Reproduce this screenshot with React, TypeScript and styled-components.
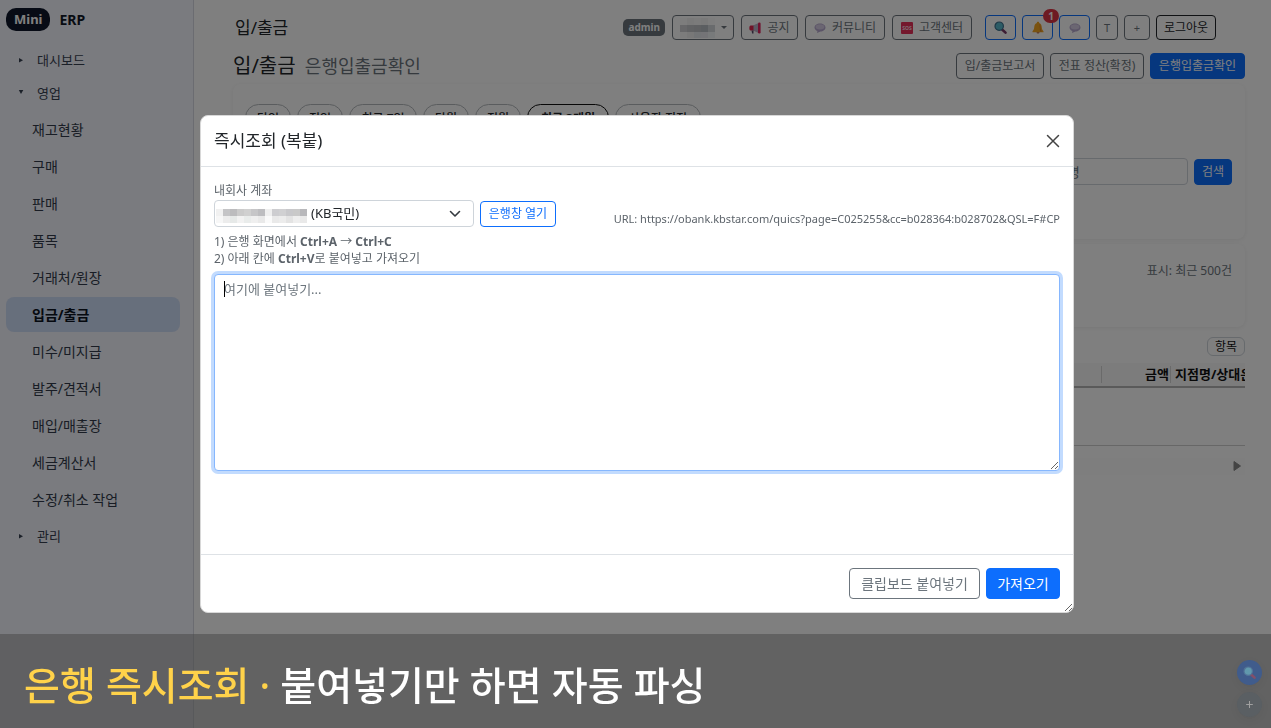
import React from 'react';
import styled, { createGlobalStyle, css } from 'styled-components';

const GlobalStyle = createGlobalStyle`
  *, *::before, *::after { box-sizing: border-box; }
  body {
    margin: 0;
    background: #fff;
    color: #212529;
    font: 13px/1.5 "Noto Sans", "Noto Sans CJK KR", sans-serif;
  }
  button, input, select, textarea { font-family: inherit; }
  h1, h2, p { margin: 0; font-weight: 400; }
`;

const Shell = styled.div`
  display: flex;
  min-height: 100vh;
`;

/* ---------- sidebar ---------- */
const Sidebar = styled.aside`
  flex: 0 0 194px;
  padding: 8px 13px 8px 6px;
  background: #f4f6ff;
  border-right: 1px solid #d6d9e2;
`;
const Brand = styled.div`
  display: flex;
  align-items: center;
  gap: 9px;
  height: 23px;
  margin-bottom: 12px;
  color: #111827;
  font-size: 14px;
  font-weight: 700;
`;
const BrandPill = styled.span`
  padding: 0 8px;
  border-radius: 10px;
  background: #0f172a;
  color: #fff;
  font-size: 13px;
  line-height: 23px;
`;
const Group = styled.button`
  display: flex;
  align-items: center;
  width: 100%;
  height: 33px;
  padding: 0 0 0 11px;
  border: 0;
  background: none;
  color: #374151;
  font-size: 13px;
`;
const Marker = styled.svg`
  width: 8px;
  height: 8px;
  margin-right: 12px;
  fill: #374151;
`;
const Menu = styled.nav`
  display: flex;
  flex-direction: column;
  gap: 2px;
  padding: 3px 0 2px;
`;
const MenuLink = styled.a<{ $active?: boolean }>`
  height: 35px;
  padding-left: 26px;
  border-radius: 8px;
  color: ${p => (p.$active ? '#0b1220' : '#333b4a')};
  background: ${p => (p.$active ? '#cfdef8' : 'transparent')};
  font-size: 14px;
  font-weight: ${p => (p.$active ? 700 : 400)};
  line-height: 35px;
  text-decoration: none;
`;

/* ---------- main ---------- */
const Main = styled.main`
  flex: 1;
  min-width: 0;
  padding: 15px 26px 0 39px;
`;
const TopBar = styled.header`
  display: flex;
  align-items: center;
  justify-content: space-between;
  height: 25px;
  margin-bottom: 13px;
  padding: 0 29px 0 2px;
`;
const TopTitle = styled.h2`
  font-size: 17px;
  line-height: 25px;
`;
const Tools = styled.div`
  display: flex;
  align-items: center;
  gap: 6px;
`;
const ToolGroup = styled(Tools)`
  gap: 7px;
  margin-right: 7px;
`;
const RoleBadge = styled.span`
  padding: 0 5px;
  border-radius: 5px;
  background: #6c757d;
  color: #fff;
  font-size: 10px;
  font-weight: 700;
  line-height: 17px;
`;
const tones = {
  secondary: css`color: #6c757d; border-color: #6c757d; background: transparent;`,
  primary: css`color: #0d6efd; border-color: #0d6efd; background: transparent;`,
  dark: css`color: #212529; border-color: #212529; background: transparent;`,
  solid: css`color: #fff; border-color: #0d6efd; background: #0d6efd;`,
};
const Button = styled.button<{ $tone?: keyof typeof tones; $h?: number; $w?: number; $size?: number }>`
  position: relative;
  display: inline-flex;
  align-items: center;
  justify-content: center;
  gap: 6px;
  flex: none;
  height: ${p => p.$h ?? 26}px;
  min-width: ${p => p.$w ?? 0}px;
  padding: 0 6px;
  border: 1px solid;
  border-radius: 4px;
  font-size: ${p => p.$size ?? 12}px;
  line-height: 18px;
  white-space: nowrap;
  ${p => tones[p.$tone ?? 'secondary']}
`;
const AlertCount = styled.span`
  position: absolute;
  top: -7px;
  right: -7px;
  width: 16px;
  border-radius: 8px;
  background: #dc3545;
  color: #fff;
  font-size: 10px;
  font-weight: 700;
  line-height: 14px;
`;
const Caret = styled.span`
  border: 3px solid transparent;
  border-top-color: #6c757d;
  border-bottom: 0;
`;
const PageHead = styled.div`
  display: flex;
  align-items: center;
  justify-content: space-between;
  height: 26px;
  margin-bottom: 5px;
`;
const PageTitle = styled.h1`
  font-size: 20px;
  line-height: 26px;
`;
const PageSub = styled.span`
  margin-left: 4px;
  color: #6c757d;
  font-size: 18px;
`;
const Card = styled.section`
  padding: 20px 13px 0 12px;
  border-radius: 8px;
  box-shadow: 0 1px 5px rgba(0, 0, 0, 0.07);
`;
const FilterCard = styled(Card)`
  height: 155px;
  margin-bottom: 5px;
`;
const SummaryCard = styled(Card)`
  height: 83px;
  margin-bottom: 10px;
  padding-top: 18px;
  color: #6c757d;
  font-size: 12px;
  text-align: right;
`;
const Pills = styled.div`
  display: flex;
  gap: 6px;
  margin-bottom: 27px;
`;
const Pill = styled.button<{ $active?: boolean; $w: number }>`
  height: 27px;
  min-width: ${p => p.$w}px;
  padding: 0;
  border: 1px solid ${p => (p.$active ? '#111' : '#b5b9bd')};
  border-radius: 14px;
  background: transparent;
  color: #212529;
  font-size: 12px;
  font-weight: ${p => (p.$active ? 700 : 500)};
`;
const SearchRow = styled.form`
  display: flex;
  align-items: center;
  justify-content: flex-end;
  gap: 6px;
`;
const SearchInput = styled.input`
  width: 194px;
  height: 27px;
  padding: 0 8px;
  border: 1px solid #ced4da;
  border-radius: 4px;
  background: transparent;
  font-size: 13px;
  &::placeholder { color: #6c757d; }
`;
const TableTools = styled.div`
  display: flex;
  justify-content: flex-end;
  margin-bottom: 7px;
`;
const ColumnsButton = styled.button`
  height: 19px;
  padding: 0 7px;
  border: 1px solid #ced4da;
  border-radius: 6px;
  background: transparent;
  color: #111;
  font-size: 12px;
  line-height: 16px;
`;
const TableWrap = styled.div`
  overflow: hidden;
`;
const Table = styled.table`
  width: 1180px;
  table-layout: fixed;
  border-collapse: collapse;
  font-size: 13px;
`;
const Th = styled.th<{ $w?: number; $right?: boolean }>`
  width: ${p => (p.$w ? `${p.$w}px` : 'auto')};
  height: 24px;
  padding: 0 2px 2px 4px;
  border-bottom: 2px solid #b4b4b4;
  background: #f8f8f8 linear-gradient(#d5d5d5, #d5d5d5) no-repeat right 3px / 1px 17px;
  color: #111;
  line-height: 18px;
  text-align: ${p => (p.$right ? 'right' : 'left')};
`;
const Td = styled.td`
  height: 58px;
  border-bottom: 1px solid #cfcfcf;
`;
const ScrollTrack = styled.div`
  display: flex;
  align-items: center;
  justify-content: flex-end;
  height: 17px;
  margin-top: 12px;
  padding-right: 4px;
  background: #fcfcfc;
`;

/* ---------- dialog ---------- */
const Backdrop = styled.div`
  position: fixed;
  inset: 0;
  display: flex;
  align-items: center;
  justify-content: center;
  padding-left: 3px;
  background: rgba(0, 0, 0, 0.5);
`;
const Dialog = styled.div`
  display: flex;
  flex-direction: column;
  width: min(874px, 94%);
  overflow: hidden;
  resize: both;
  border: 1px solid #d8d8d8;
  border-radius: 8px;
  background: #fff;
`;
const DialogHead = styled.div`
  display: flex;
  align-items: center;
  justify-content: space-between;
  height: 51px;
  padding: 0 13px;
  border-bottom: 1px solid #dee2e6;
`;
const DialogTitle = styled.h2`
  font-size: 17px;
  line-height: 24px;
`;
const CloseButton = styled.button`
  display: flex;
  padding: 0;
  border: 0;
  background: none;
`;
const DialogBody = styled.div`
  display: flex;
  flex-direction: column;
  min-height: 387px;
  padding: 15px 13px;
  color: #5c636a;
  font-size: 12px;
  line-height: 18px;
`;
const AccountRow = styled.div`
  display: flex;
  align-items: center;
  gap: 6px;
  margin-bottom: 6px;
`;
const SelectBox = styled.div`
  position: relative;
  width: 260px;
`;
const Select = styled.select`
  display: block;
  width: 100%;
  height: 27px;
  padding: 0 30px 1px 96px;
  border: 1px solid #ced4da;
  border-radius: 4px;
  appearance: none;
  background: #fff;
  color: #212529;
  font-size: 13px;
`;
const Chevron = styled.svg`
  position: absolute;
  top: 8px;
  right: 13px;
  pointer-events: none;
`;
const HiddenNumber = styled.svg`
  position: absolute;
  top: 9px;
  left: 2px;
  pointer-events: none;
`;
const BankUrl = styled.span`
  align-self: flex-end;
  margin-left: auto;
  font-size: 11px;
  line-height: 16px;
`;
const Help = styled.p`
  line-height: 17px;
`;
const PasteBox = styled.div`
  position: relative;
  margin-top: 7px;
`;
const PasteArea = styled.textarea`
  display: block;
  width: 100%;
  height: 197px;
  padding: 4px 9px;
  outline: 0;
  border: 1px solid #86b7fe;
  border-radius: 4px;
  box-shadow: 0 0 0 3px #c2dbfe;
  caret-color: transparent;
  font-size: 13px;
  line-height: 20px;
  &::placeholder { color: #6c757d; }
`;
const TextCursor = styled.span`
  position: absolute;
  top: 7px;
  left: 10px;
  width: 1px;
  height: 16px;
  background: #000;
`;
const DialogFoot = styled.div`
  display: flex;
  align-items: center;
  justify-content: flex-end;
  gap: 6px;
  height: 58px;
  padding: 0 13px;
  border-top: 1px solid #dee2e6;
`;

/* ---------- caption and floating buttons ---------- */
const Caption = styled.div`
  position: fixed;
  right: 0;
  bottom: 0;
  left: 0;
  display: flex;
  align-items: center;
  height: 94px;
  padding: 0 24px;
  background: rgba(70, 70, 70, 0.5);
`;
const CaptionText = styled.p`
  flex: 1;
  padding-top: 8px;
  color: #fff;
  font-size: 39px;
  font-weight: 500;
  line-height: 56px;
`;
const Accent = styled.span`
  color: #ffd24a;
`;
const Fabs = styled.div`
  position: absolute;
  right: 9px;
  bottom: 11px;
  display: flex;
  flex-direction: column;
  gap: 7px;
`;
const Fab = styled.button<{ $primary?: boolean }>`
  display: flex;
  align-items: center;
  justify-content: center;
  width: 25px;
  height: 25px;
  padding: 0;
  border: 0;
  border-radius: 50%;
  background: ${p => (p.$primary ? '#405c8c' : '#5a5f63')};
  box-shadow: 0 3px 8px rgba(0, 0, 0, 0.06);
  color: #a0a0a0;
  font-size: 14px;
`;

/* ---------- icons ---------- */
const Megaphone = () => (
  <svg width="12" height="12" viewBox="0 0 12 12">
    <path d="M4 3.500 9.500 1v10L4 8.500z" fill="#b9b2c8" />
    <rect x="9" y=".5" width="2.600" height="11" rx="1.200" fill="#e0245e" />
    <path d="M1.500 3.400h3v5.200h-3Q.3 8.600.3 6t1.200-2.600z" fill="#e0244f" />
    <path d="M2.500 8.500h2v3h-1.400z" fill="#5b4a6a" />
  </svg>
);
const Bubble = () => (
  <svg width="12" height="12" viewBox="0 0 12 12">
    <path d="M6 1.500c3.200 0 5.500 1.700 5.500 4S9.200 9.500 6.500 9.500L3 11l.4-2C1.600 8.300.5 7.100.5 5.500c0-2.300 2.300-4 5.500-4z" fill="#b7a9cf" />
    <ellipse cx="6" cy="4.800" rx="4.400" ry="2.600" fill="#d6cde4" />
  </svg>
);
const SosBox = styled.span`
  width: 12px;
  border-radius: 1px;
  background: #e8315b;
  color: #ffd9e2;
  font-size: 5px;
  font-weight: 700;
  line-height: 12px;
  text-align: center;
`;
const Magnifier = ({ faded }: { faded?: boolean }) => (
  <svg width="13" height="13" viewBox="0 0 13 13" opacity={faded ? 0.7 : 1}>
    <path d="m7.800 8.200 3.700 3.400" stroke={faded ? '#a04a5c' : '#7a3a68'} strokeWidth="2.600" strokeLinecap="round" />
    <circle cx="5.200" cy="5.200" r="4.200" fill={faded ? '#6fb3bb' : '#58b8cc'} stroke={faded ? '#5a7d9c' : '#3d6f8c'} strokeWidth="1.200" />
  </svg>
);
const Bell = () => (
  <svg width="12" height="13" viewBox="0 0 12 13">
    <path d="M6 .8c.8 0 1.200.5 1.200 1.200 2 .7 2.500 2.600 2.600 4.600.1 1.700.6 2.400 1.700 3.600v1H.5v-1c1.100-1.200 1.600-1.900 1.700-3.600.1-2 .6-3.900 2.600-4.600C4.800 1.300 5.200.8 6 .8z" fill="#f5a623" />
    <path d="M7.500 3c1 1 1.100 2.500 1.200 4 .1 1.500.5 2.500 1.300 3.400H8z" fill="#d9822b" />
    <path d="M4.500 11.200h3a1.500 1.300 0 0 1-3 0z" fill="#b35c2e" />
  </svg>
);
const CELL = 7;
const accountTop = ['#f1f1f1', '#c4c4c6', '#bcbcbe', '#cbcbcb', '#d0d0d0', '#c6c6c8', '#bdbdc0', '#efefef', '#cdcdd0', '#d0d0d2', '#c8c8cb', '#c9c9c9', '#b8b8bb'];
const accountBottom = ['#f7f7f7', '#ececec', '#e6e9e8', '#f2f2f2', '#e9eceb', '#efefef', '#e9e9e9', '#fafafa', '#e9e9e9', '#ececec', '#e3e3e3', '#eeeeee', '#e9e9e9'];
const nameCells = [
  ['#fbfbfb', '#f2f2f2', '#f6f6f6', '#f3f3f3', '#fafafa'],
  ['#cfcfd2', '#c2c5c9', '#bfc1c5', '#b7bdc2', '#d2d6da'],
  ['#f8f8f8', '#f0f0f0', '#e4e8ec', '#e9e9ee', '#f1f4f7'],
];

const menu = ['재고현황', '구매', '판매', '품목', '거래처/원장', '입금/출금', '미수/미지급', '발주/견적서', '매입/매출장', '세금계산서', '수정/취소 작업'];
const periods: [string, number][] = [['당일', 46], ['전일', 46], ['최근 7일', 68], ['당월', 46], ['전월', 46], ['최근 3개월', 82], ['사용자 지정', 86]];

const Closed = () => <Marker viewBox="0 0 8 8"><path d="M2 2v4.500l4-2.200z" /></Marker>;
const Open = () => <Marker viewBox="0 0 8 8"><path d="M1.800 1h4.500L4 5z" /></Marker>;

export default function App() {
  return (
    <>
      <GlobalStyle />
      <Shell>
        <Sidebar>
          <Brand><BrandPill>Mini</BrandPill>ERP</Brand>
          <Group><Closed />대시보드</Group>
          <Group><Open />영업</Group>
          <Menu>
            {menu.map(m => <MenuLink key={m} href="#" $active={m === '입금/출금'}>{m}</MenuLink>)}
          </Menu>
          <Group><Closed />관리</Group>
        </Sidebar>
        <Main>
          <TopBar>
            <TopTitle>입/출금</TopTitle>
            <Tools>
              <ToolGroup>
                <RoleBadge>admin</RoleBadge>
                <Button $h={25} $w={62} aria-label="사용자">
                  <svg width="35" height="20" shapeRendering="crispEdges">
                    {nameCells.map((row, y) => row.map((c, x) => (
                      <rect key={`${x}-${y}`} x={x * CELL} y={y * CELL} width={CELL} height={CELL} fill={c} />
                    )))}
                  </svg>
                  <Caret />
                </Button>
                <Button $h={25} $w={57}><Megaphone />공지</Button>
                <Button $h={25} $w={80}><Bubble />커뮤니티</Button>
                <Button $h={25} $w={80}><SosBox>SOS</SosBox>고객센터</Button>
              </ToolGroup>
              <Button $h={25} $w={31} $tone="primary" aria-label="검색"><Magnifier /></Button>
              <Button $h={25} $w={31} $tone="primary" aria-label="알림"><Bell /><AlertCount>1</AlertCount></Button>
              <Button $h={25} $w={31} $tone="primary" aria-label="채팅"><Bubble /></Button>
              <Button $h={25} $w={22} $size={11}>T</Button>
              <Button $h={25} $w={26} $size={11}>+</Button>
              <Button $h={25} $w={60} $tone="dark">로그아웃</Button>
            </Tools>
          </TopBar>
          <PageHead>
            <PageTitle>입/출금 <PageSub>은행입출금확인</PageSub></PageTitle>
            <Tools>
              <Button $w={88}>입/출금보고서</Button>
              <Button $w={94}>전표 정산(확정)</Button>
              <Button $w={95} $tone="solid">은행입출금확인</Button>
            </Tools>
          </PageHead>
          <FilterCard>
            <Pills>
              {periods.map(([label, w]) => <Pill key={label} $w={w} $active={label === '최근 3개월'}>{label}</Pill>)}
            </Pills>
            <SearchRow>
              <SearchInput aria-label="검색어" placeholder="예금주/지점명" />
              <Button type="button" $tone="solid" $w={38}>검색</Button>
            </SearchRow>
          </FilterCard>
          <SummaryCard>표시: 최근 500건</SummaryCard>
          <TableTools><ColumnsButton>항목</ColumnsButton></TableTools>
          <TableWrap>
            <Table>
              <thead>
                <tr>
                  <Th $w={869} />
                  <Th $w={69} $right>금액</Th>
                  <Th>지점명/상대은행</Th>
                </tr>
              </thead>
              <tbody>
                <tr><Td colSpan={3} /></tr>
              </tbody>
            </Table>
          </TableWrap>
          <ScrollTrack>
            <svg width="8" height="10" viewBox="0 0 8 10"><path d="M1 .5v9l6.500-4.500z" fill="#888" stroke="#888" strokeLinejoin="round" /></svg>
          </ScrollTrack>
        </Main>
      </Shell>

      <Backdrop>
        <Dialog role="dialog" aria-labelledby="dialog-title">
          <DialogHead>
            <DialogTitle id="dialog-title">즉시조회 (복붙)</DialogTitle>
            <CloseButton aria-label="닫기">
              <svg width="14" height="14" viewBox="0 0 14 14"><path d="m1.500 1.500 11 11m0-11-11 11" stroke="#444" strokeWidth="1.500" strokeLinecap="round" /></svg>
            </CloseButton>
          </DialogHead>
          <DialogBody>
            <label htmlFor="account">내회사 계좌</label>
            <AccountRow>
              <SelectBox>
                <Select id="account"><option>(KB국민)</option></Select>
                <HiddenNumber width={13 * CELL} height={2 * CELL} shapeRendering="crispEdges">
                  {accountTop.map((c, i) => <rect key={i} x={i * CELL} width={CELL} height={CELL} fill={c} />)}
                  {accountBottom.map((c, i) => <rect key={i} x={i * CELL} y={CELL} width={CELL} height={CELL} fill={c} />)}
                </HiddenNumber>
                <Chevron width="12" height="12" viewBox="0 0 12 12"><path d="m1.500 3.500 4.500 4.500 4.500-4.500" fill="none" stroke="#343a40" strokeWidth="1.600" strokeLinecap="round" strokeLinejoin="round" /></Chevron>
              </SelectBox>
              <Button $tone="primary" $w={76}>은행창 열기</Button>
              <BankUrl>URL: https://obank.kbstar.com/quics?page=C025255&amp;cc=b028364:b028702&amp;QSL=F#CP</BankUrl>
            </AccountRow>
            <Help>1) 은행 화면에서 <b>Ctrl+A</b> → <b>Ctrl+C</b></Help>
            <Help>2) 아래 칸에 <b>Ctrl+V</b>로 붙여넣고 가져오기</Help>
            <PasteBox>
              <PasteArea autoFocus aria-label="은행 내역" placeholder="여기에 붙여넣기..." />
              <TextCursor />
            </PasteBox>
          </DialogBody>
          <DialogFoot>
            <Button $h={31} $w={131} $size={14}>클립보드 붙여넣기</Button>
            <Button $h={31} $w={74} $size={14} $tone="solid">가져오기</Button>
          </DialogFoot>
        </Dialog>
      </Backdrop>

      <Caption>
        <CaptionText><Accent>은행 즉시조회 ·</Accent> 붙여넣기만 하면 자동 파싱</CaptionText>
        <Fabs>
          <Fab $primary aria-label="검색"><Magnifier faded /></Fab>
          <Fab aria-label="추가">+</Fab>
        </Fabs>
      </Caption>
    </>
  );
}
